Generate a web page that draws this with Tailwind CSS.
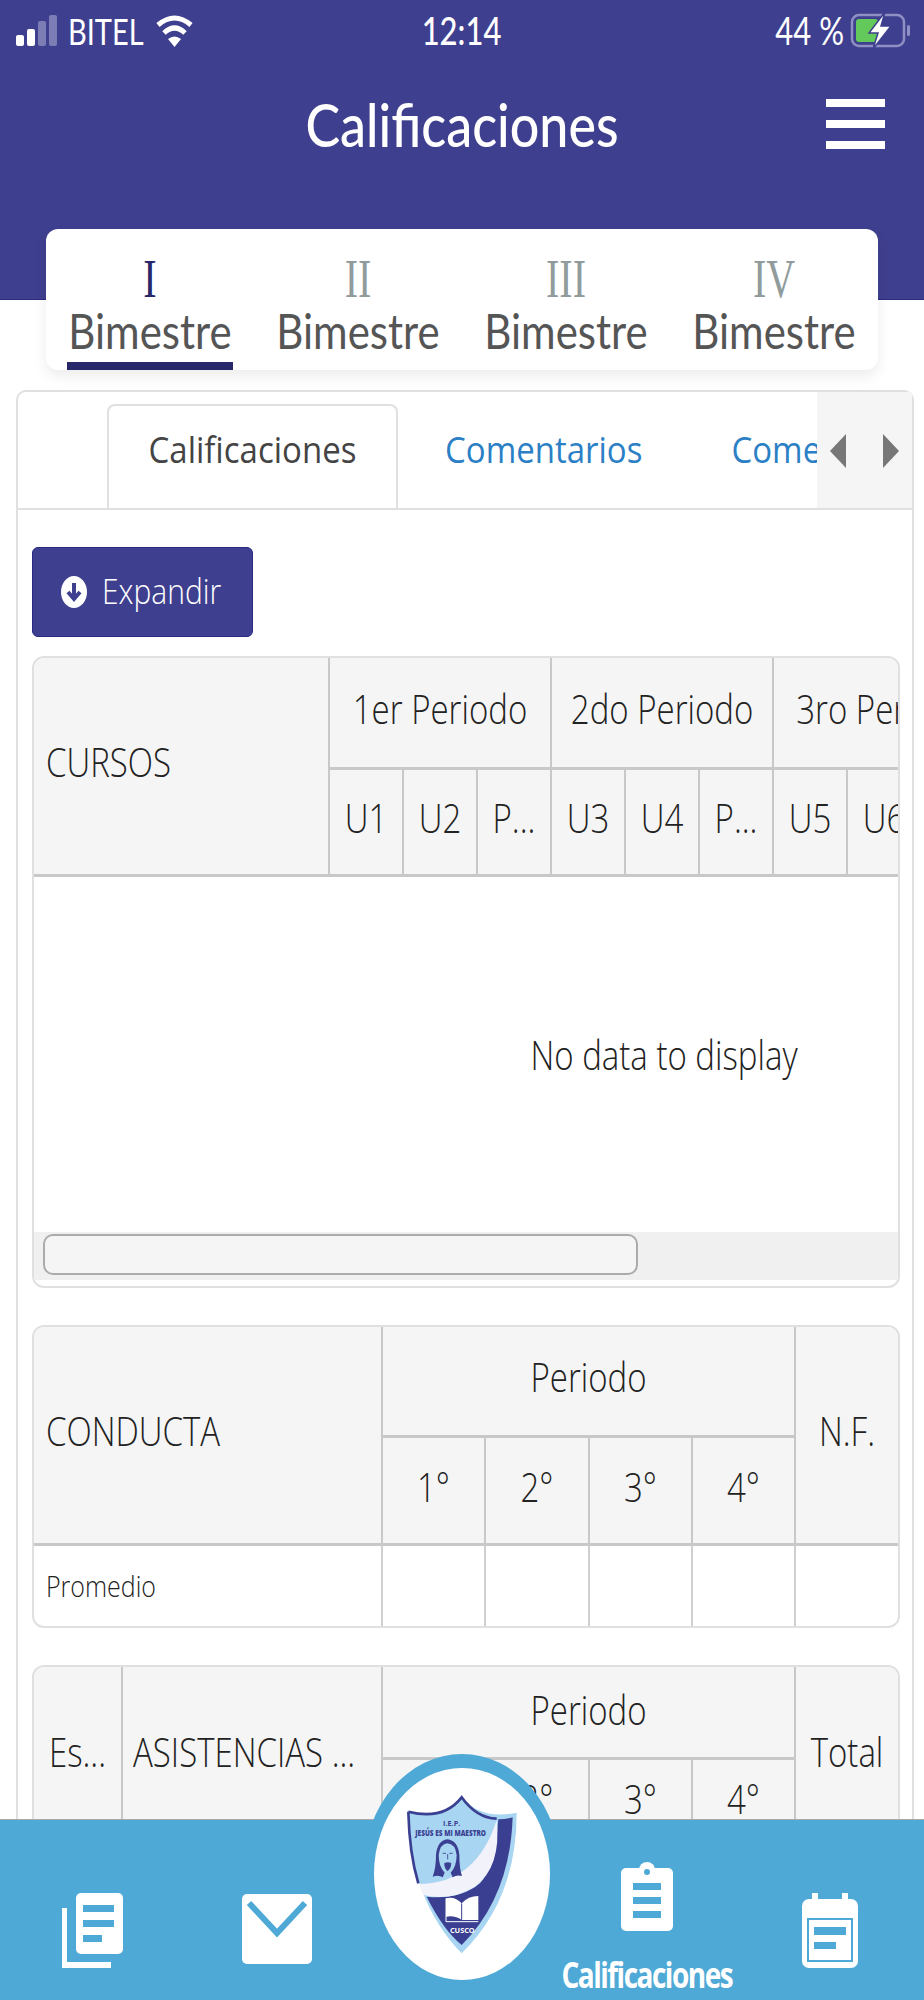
<!DOCTYPE html>
<html lang="es">
<head>
    <meta charset="UTF-8">
    <meta name="viewport" content="width=device-width, initial-scale=1.0">
    <title>Calificaciones</title>
    <script src="https://cdn.jsdelivr.net/npm/@tailwindcss/browser@4"></script>
</head>
<body class="relative w-[924px] h-[2000px] overflow-hidden bg-white font-['Open_Sans',sans-serif] text-[#222]">
    <!-- Header -->
    <header class="h-[300px] bg-[#3f3f8f] text-white border-b border-[#2a2a80]">
        <div class="flex items-center h-[60px] pl-[16px] pr-[14px]">
            <svg class="w-[41px] h-[31px]" viewBox="0 0 41 31">
                <rect x="0" y="20" width="8" height="11" rx="2" fill="#fff"/>
                <rect x="11" y="14" width="8" height="17" rx="2" fill="#fff"/>
                <rect x="22" y="6" width="8" height="25" rx="2" fill="#7d7db5"/>
                <rect x="33" y="0" width="8" height="31" rx="2" fill="#7d7db5"/>
            </svg>
            <span class="ml-[11px] inline-block scale-y-125 font-['Lato'] text-[29px] leading-none">BITEL</span>
            <svg class="ml-[12px] w-[37px] h-[33px]" viewBox="0 0 37 33" fill="none" stroke="#fff">
                <path d="M2 11Q18.500 -3 35 11" stroke-width="5"/>
                <path d="M8 19Q18.500 9 29 19" stroke-width="5"/>
                <path d="M12 25Q18.500 20 25 25L18.500 33Z" fill="#fff" stroke="none"/>
            </svg>
            <span class="ml-[229px] inline-block scale-y-125 font-['Lato'] text-[31px] font-medium leading-none">12:14</span>
            <span class="ml-auto inline-block scale-y-125 font-['Lato'] text-[31px] leading-none">44 %</span>
            <svg class="ml-[6px] w-[60px] h-[37px]" viewBox="0 0 60 37">
                <rect x="2" y="3" width="52" height="31" rx="7" fill="none" stroke="#8f8fc4" stroke-width="2.500"/>
                <rect x="57" y="13" width="3" height="11" rx="1.500" fill="#8f8fc4"/>
                <rect x="6" y="7" width="22" height="23" rx="3" fill="#63c95a"/>
                <path d="M35 0L19 21L28 21L23 37L41 14L31 14Z" fill="#fff" stroke="#3f3f8f" stroke-width="1.500"/>
            </svg>
        </div>
        <div class="grid grid-cols-[1fr_auto_1fr] items-center mt-[34px] h-[60px]">
            <span></span>
            <h1 class="inline-block scale-y-115 font-['Lato'] text-[52px] font-medium leading-none">Calificaciones</h1>
            <div class="flex flex-col gap-[13px] justify-self-end mr-[39px] w-[59px]">
                <span class="h-[8px] bg-white"></span>
                <span class="h-[8px] bg-white"></span>
                <span class="h-[8px] bg-white"></span>
            </div>
        </div>
    </header>

    <!-- Bimestres -->
    <nav class="relative mx-[46px] -mt-[71px] h-[141px] bg-white rounded-[12px] shadow-[0_6px_14px_rgba(0,0,0,0.08)] grid grid-cols-4">
        <div class="relative flex flex-col items-center pt-[28px]">
            <span class="inline-block scale-y-[1.38] font-['Liberation_Serif'] text-[40px] leading-[44px] text-[#27276a]">I</span>
            <span class="inline-block scale-y-115 font-['Lato'] text-[42px] leading-[46px] text-[#555] mt-[7px]">Bimestre</span>
            <span class="absolute bottom-0 left-[21px] w-[166px] h-[8px] bg-[#27276a]"></span>
        </div>
        <div class="flex flex-col items-center pt-[28px]">
            <span class="inline-block scale-y-[1.38] font-['Liberation_Serif'] text-[40px] leading-[44px] text-[#909c9c]">II</span>
            <span class="inline-block scale-y-115 font-['Lato'] text-[42px] leading-[46px] text-[#555] mt-[7px]">Bimestre</span>
        </div>
        <div class="flex flex-col items-center pt-[28px]">
            <span class="inline-block scale-y-[1.38] font-['Liberation_Serif'] text-[40px] leading-[44px] text-[#909c9c]">III</span>
            <span class="inline-block scale-y-115 font-['Lato'] text-[42px] leading-[46px] text-[#555] mt-[7px]">Bimestre</span>
        </div>
        <div class="flex flex-col items-center pt-[28px]">
            <span class="inline-block scale-y-[1.38] font-['Liberation_Serif'] text-[40px] leading-[44px] text-[#909c9c]">IV</span>
            <span class="inline-block scale-y-115 font-['Lato'] text-[42px] leading-[46px] text-[#555] mt-[7px]">Bimestre</span>
        </div>
    </nav>

    <!-- Panel -->
    <section class="ml-[16px] mr-[10px] mt-[20px] h-[1700px] border-2 border-[#e0e0e0] rounded-[10px]">
        <div class="relative flex h-[118px] border-b-2 border-[#e0e0e0] overflow-hidden">
            <div class="shrink-0 ml-[89px] mt-[12px] w-[291px] h-[106px] border-2 border-b-0 border-[#e0e0e0] rounded-t-[8px] bg-white flex justify-center pt-[24px] text-[33px] text-[#444]">
                <span class="inline-block scale-y-110 leading-[44px]">Calificaciones</span>
            </div>
            <div class="shrink-0 ml-[47px] pt-[33px] text-[33px] text-[#2b80c5]">
                <span class="inline-block scale-y-110 leading-[44px]">Comentarios</span>
            </div>
            <div class="shrink-0 ml-[89px] pt-[33px] text-[33px] text-[#2b80c5]">
                <span class="inline-block scale-y-110 leading-[44px] whitespace-nowrap">Comentarios</span>
            </div>
            <div class="absolute right-0 top-0 w-[95px] h-[116px] bg-[#f5f5f5] flex justify-between items-center pl-[13px] pr-[13px] pt-[2px]">
                <svg class="w-[16px] h-[34px]" viewBox="0 0 16 34"><path d="M16 0V34L0 17Z" fill="#777"/></svg>
                <svg class="w-[16px] h-[34px]" viewBox="0 0 16 34"><path d="M0 0V34L16 17Z" fill="#777"/></svg>
            </div>
        </div>

        <div class="pl-[14px] pt-[37px]">
            <button class="flex items-center w-[221px] h-[90px] bg-[#3f3f8f] border border-[#2a2a85] rounded-[6px] text-white pl-[28px] text-[30px] font-light">
                <svg class="w-[26px] h-[32px]" viewBox="0 0 26 32">
                    <ellipse cx="13" cy="16" rx="13" ry="16" fill="#fff"/>
                    <path d="M13 7V22M7 16L13 23L19 16" fill="none" stroke="#3f3f8f" stroke-width="4"/>
                </svg>
                <span class="ml-[15px] mb-[4px] inline-block scale-y-115">Expandir</span>
            </button>

            <!-- Cursos -->
            <div class="mt-[19px] w-[868px] border-2 border-[#e0e0e0] rounded-[12px] overflow-hidden text-[33px] font-light">
                <table class="table-fixed border-collapse w-[1257px]">
                    <colgroup>
                        <col class="w-[295px]"><col class="w-[74px]"><col class="w-[74px]"><col class="w-[74px]"><col class="w-[74px]"><col class="w-[74px]"><col class="w-[74px]"><col class="w-[74px]"><col class="w-[74px]"><col class="w-[74px]"><col class="w-[74px]"><col class="w-[74px]"><col class="w-[74px]"><col class="w-[74px]">
                    </colgroup>
                    <thead class="bg-[#f5f5f5] [&_th]:pb-[6px]">
                        <tr class="h-[110px]">
                            <th rowspan="2" class="border-r-2 border-b-[3px] border-[#c8c8c8] text-left font-light pl-[12px]"><span class="inline-block scale-y-120">CURSOS</span></th>
                            <th colspan="3" class="border-r-2 border-b-[3px] border-[#c8c8c8] font-light whitespace-nowrap"><span class="inline-block scale-y-120">1er Periodo</span></th>
                            <th colspan="3" class="border-r-2 border-b-[3px] border-[#c8c8c8] font-light whitespace-nowrap"><span class="inline-block scale-y-120">2do Periodo</span></th>
                            <th colspan="3" class="border-r-2 border-b-[3px] border-[#c8c8c8] font-light whitespace-nowrap"><span class="inline-block scale-y-120">3ro Periodo</span></th>
                            <th colspan="3" class="border-b-[3px] border-[#c8c8c8]"></th>
                        </tr>
                        <tr class="h-[107px]">
                            <th class="border-r-2 border-b-[3px] border-[#c8c8c8] font-light"><span class="inline-block scale-y-120">U1</span></th>
                            <th class="border-r-2 border-b-[3px] border-[#c8c8c8] font-light"><span class="inline-block scale-y-120">U2</span></th>
                            <th class="border-r-2 border-b-[3px] border-[#c8c8c8] font-light"><span class="inline-block scale-y-120">P...</span></th>
                            <th class="border-r-2 border-b-[3px] border-[#c8c8c8] font-light"><span class="inline-block scale-y-120">U3</span></th>
                            <th class="border-r-2 border-b-[3px] border-[#c8c8c8] font-light"><span class="inline-block scale-y-120">U4</span></th>
                            <th class="border-r-2 border-b-[3px] border-[#c8c8c8] font-light"><span class="inline-block scale-y-120">P...</span></th>
                            <th class="border-r-2 border-b-[3px] border-[#c8c8c8] font-light"><span class="inline-block scale-y-120">U5</span></th>
                            <th class="border-r-2 border-b-[3px] border-[#c8c8c8] font-light"><span class="inline-block scale-y-120">U6</span></th>
                            <th class="border-r-2 border-b-[3px] border-[#c8c8c8]"></th>
                            <th class="border-b-[3px] border-[#c8c8c8]"></th>
                            <th class="border-b-[3px] border-[#c8c8c8]"></th>
                            <th class="border-b-[3px] border-[#c8c8c8]"></th>
                            <th class="border-b-[3px] border-[#c8c8c8]"></th>
                        </tr>
                    </thead>
                </table>
                <div class="flex items-center justify-center w-[1260px] h-[355px] pt-[3px]">
                    <span class="inline-block scale-y-120">No data to display</span>
                </div>
                <div class="h-[48px] bg-[#f0f0f0] pl-[9px] pt-[2px]">
                    <div class="w-[595px] h-[41px] bg-[#f5f5f5] border-2 border-[#ababab] rounded-[10px]"></div>
                </div>
                <div class="h-[6px]"></div>
            </div>

            <!-- Conducta -->
            <div class="mt-[37px] w-[868px] border-2 border-[#e0e0e0] rounded-[12px] overflow-hidden text-[33px] font-light">
                <table class="table-fixed border-collapse w-full">
                    <colgroup>
                        <col class="w-[348px]"><col class="w-[103px]"><col class="w-[104px]"><col class="w-[103px]"><col class="w-[103px]"><col>
                    </colgroup>
                    <thead class="bg-[#f5f5f5] [&_th]:pb-[6px]">
                        <tr class="h-[110px]">
                            <th rowspan="2" class="border-r-2 border-b-[3px] border-[#c8c8c8] text-left font-light pl-[12px]"><span class="inline-block scale-y-120">CONDUCTA</span></th>
                            <th colspan="4" class="border-r-2 border-b-[3px] border-[#c8c8c8] font-light"><span class="inline-block scale-y-120">Periodo</span></th>
                            <th rowspan="2" class="border-b-[3px] border-[#c8c8c8] font-light"><span class="inline-block scale-y-120">N.F.</span></th>
                        </tr>
                        <tr class="h-[108px]">
                            <th class="border-r-2 border-b-[3px] border-[#c8c8c8] font-light"><span class="inline-block scale-y-120">1°</span></th>
                            <th class="border-r-2 border-b-[3px] border-[#c8c8c8] font-light"><span class="inline-block scale-y-120">2°</span></th>
                            <th class="border-r-2 border-b-[3px] border-[#c8c8c8] font-light"><span class="inline-block scale-y-120">3°</span></th>
                            <th class="border-r-2 border-b-[3px] border-[#c8c8c8] font-light"><span class="inline-block scale-y-120">4°</span></th>
                        </tr>
                    </thead>
                    <tbody>
                        <tr class="h-[81px]">
                            <td class="border-r-2 border-[#d0d0d0] pl-[12px] text-[25px]"><span class="inline-block scale-y-120">Promedio</span></td>
                            <td class="border-r-2 border-[#d0d0d0]"></td>
                            <td class="border-r-2 border-[#d0d0d0]"></td>
                            <td class="border-r-2 border-[#d0d0d0]"></td>
                            <td class="border-r-2 border-[#d0d0d0]"></td>
                            <td></td>
                        </tr>
                    </tbody>
                </table>
            </div>

            <!-- Asistencias -->
            <div class="mt-[37px] w-[868px] border-2 border-[#e0e0e0] rounded-[12px] overflow-hidden text-[33px] font-light">
                <table class="table-fixed border-collapse w-full">
                    <colgroup>
                        <col class="w-[88px]"><col class="w-[260px]"><col class="w-[103px]"><col class="w-[104px]"><col class="w-[103px]"><col class="w-[103px]"><col>
                    </colgroup>
                    <thead class="bg-[#f5f5f5]">
                        <tr class="h-[92px]">
                            <th rowspan="2" class="border-r-2 border-[#c8c8c8] font-light"><span class="inline-block scale-y-120">Es...</span></th>
                            <th rowspan="2" class="border-r-2 border-[#c8c8c8] font-light text-left pl-[10px] whitespace-nowrap"><span class="inline-block scale-y-120">ASISTENCIAS ...</span></th>
                            <th colspan="4" class="border-r-2 border-b-[3px] border-[#c8c8c8] font-light pb-[3px]"><span class="inline-block scale-y-120">Periodo</span></th>
                            <th rowspan="2" class="font-light"><span class="inline-block scale-y-120">Total</span></th>
                        </tr>
                        <tr class="h-[80px]">
                            <th class="border-r-2 border-[#c8c8c8] font-light"></th>
                            <th class="border-r-2 border-[#c8c8c8] font-light"><span class="inline-block scale-y-120">2°</span></th>
                            <th class="border-r-2 border-[#c8c8c8] font-light"><span class="inline-block scale-y-120">3°</span></th>
                            <th class="border-r-2 border-[#c8c8c8] font-light"><span class="inline-block scale-y-120">4°</span></th>
                        </tr>
                    </thead>
                </table>
            </div>
        </div>
    </section>

    <!-- Bottom nav -->
    <footer class="absolute bottom-0 left-0 w-full h-[181px] bg-[#4fa9d6] border-t border-[#a9a9a9] grid grid-cols-5 text-white">
        <div class="flex justify-center pt-[73px]">
            <svg class="w-[61px] h-[75px]" viewBox="0 0 61 75">
                <rect x="14" y="0" width="47" height="61" rx="5" fill="#fff"/>
                <rect x="21" y="12" width="31" height="7" fill="#4fa9d6"/>
                <rect x="21" y="27" width="31" height="7" fill="#4fa9d6"/>
                <rect x="21" y="42" width="19" height="7" fill="#4fa9d6"/>
                <path d="M0 15H5V69H49V75H0Z" fill="#fff"/>
            </svg>
        </div>
        <div class="flex justify-center pt-[74px]">
            <svg class="w-[70px] h-[70px]" viewBox="0 0 70 70">
                <rect width="70" height="70" rx="5" fill="#fff"/>
                <path d="M7 9L35 39L63 9" fill="none" stroke="#4fa9d6" stroke-width="6"/>
            </svg>
        </div>
        <div></div>
        <div class="flex flex-col items-center pt-[42px]">
            <svg class="w-[52px] h-[69px]" viewBox="0 0 52 69">
                <rect y="6" width="52" height="63" rx="5" fill="#fff"/>
                <circle cx="26" cy="8" r="8" fill="#fff"/>
                <circle cx="26" cy="10" r="3" fill="#4fa9d6"/>
                <rect x="12" y="21" width="28" height="7" fill="#4fa9d6"/>
                <rect x="12" y="35" width="28" height="7" fill="#4fa9d6"/>
                <rect x="12" y="49" width="28" height="7" fill="#4fa9d6"/>
            </svg>
            <span class="mt-[25px] inline-block scale-y-125 text-[28px] font-bold tracking-[-1.5px] leading-[36px] whitespace-nowrap">Calificaciones</span>
        </div>
        <div class="flex justify-center pt-[73px] pr-[3px]">
            <svg class="w-[56px] h-[75px]" viewBox="0 0 56 75">
                <rect x="10" y="0" width="6" height="12" fill="#fff"/>
                <rect x="40" y="0" width="6" height="12" fill="#fff"/>
                <rect y="6" width="56" height="69" rx="7" fill="#fff"/>
                <rect x="6" y="26" width="44" height="42" fill="#fff" stroke="#4fa9d6" stroke-width="2"/>
                <rect x="12" y="34" width="32" height="8" fill="#4fa9d6"/>
                <rect x="12" y="49" width="22" height="7" fill="#4fa9d6"/>
            </svg>
        </div>

        <!-- Escudo -->
        <div class="absolute left-[364px] -top-[66px] w-[196px] h-[230px] rounded-[50%] bg-[#4fa9d6]"></div>
        <div class="absolute left-[374px] -top-[52px] w-[176px] h-[212px] rounded-[50%] bg-white"></div>
        <svg class="absolute left-[360px] -top-[80px] w-[200px] h-[240px]" viewBox="0 0 600 720">
            <path d="M143 215Q250 240 305 170Q360 240 470 218Q470 480 305 640Q150 480 143 215Z" fill="#a8d5f2"/>
            <path d="M415 238Q440 238 458 232Q450 470 305 615Q250 570 200 470Q300 480 360 430Q405 380 415 238Z" fill="#3a3f92"/>
            <path d="M178 432Q350 430 410 240Q425 380 345 440Q270 485 190 465Z" fill="#f1f2fa"/>
            <path d="M145 215Q250 242 305 172Q350 235 410 236M145 215Q148 340 175 430" fill="none" stroke="#3a3f92" stroke-width="8"/>
            <text x="275" y="258" text-anchor="middle" font-family="Open Sans" font-weight="700" font-size="22" fill="#3a3f92">I.E.P.</text>
            <text x="272" y="287" text-anchor="middle" font-family="Open Sans" font-weight="800" font-size="27" textLength="212" lengthAdjust="spacingAndGlyphs" fill="#3a3f92">JESÚS ES MI MAESTRO</text>
            <path d="M262 298Q232 302 228 345Q228 385 218 410Q236 404 248 412L254 398Q236 380 236 345Q240 312 262 310Q286 312 290 345Q290 380 272 398L278 412Q290 404 306 408Q298 385 298 345Q294 302 262 298Z" fill="#3a3f92"/>
            <path d="M248 340H258M268 340H278M263 342V358M254 370Q263 366 273 370Q271 388 263 392Q255 388 254 370Z" fill="#3a3f92" stroke="#3a3f92" stroke-width="2.500"/>
            <path d="M258 475Q285 468 305 490Q325 468 355 468V540H305Q285 525 258 530Z" fill="#fff"/>
            <path d="M305 490V540M258 475V545H355" fill="none" stroke="#fff" stroke-width="3"/>
            <path d="M305 490V540" fill="none" stroke="#3a3f92" stroke-width="3"/>
            <text x="307" y="580" text-anchor="middle" font-family="Open Sans" font-weight="700" font-size="22" fill="#fff">CUSCO</text>
        </svg>
    </footer>
</body>
</html>
